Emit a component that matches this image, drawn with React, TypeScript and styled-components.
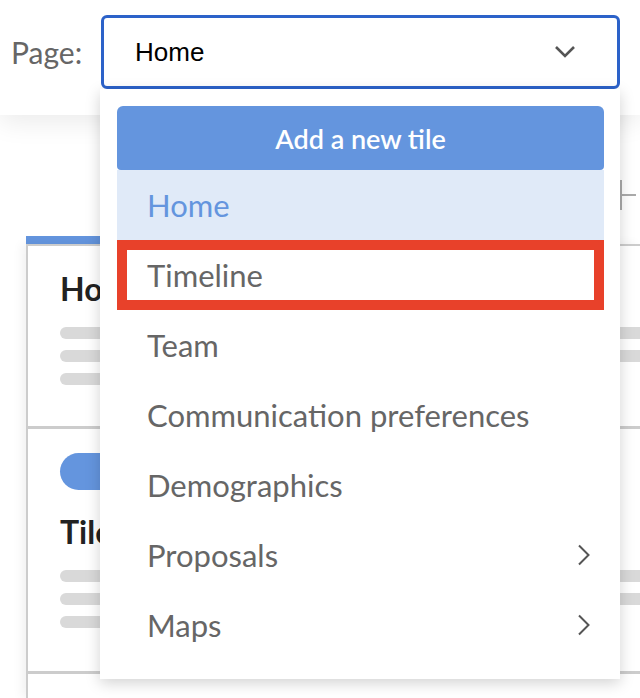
import styled, { createGlobalStyle } from 'styled-components';

const GlobalStyle = createGlobalStyle`
  html, body {
    margin: 0;
    height: 100%;
    overflow: hidden;
    background: #fff;
    font-family: Lato, "Noto Sans", sans-serif;
  }
`;

const Header = styled.header`
  position: relative;
  z-index: 2;
  height: 115px;
  box-sizing: border-box;
  padding: 15px 0 0 11px;
  display: flex;
  align-items: flex-start;
  gap: 18px;
  background: #fff;
  box-shadow: 0 8px 24px rgba(0, 0, 0, 0.08);
`;

const Label = styled.label`
  width: 72px;
  font-size: 30px;
  line-height: 74px;
  color: #666;
  white-space: nowrap;
`;

const SelectWrap = styled.div`
  position: relative;
  width: 519px;
`;

const SelectBox = styled.div`
  height: 74px;
  box-sizing: border-box;
  border: 3px solid #2c62c9;
  border-radius: 6px;
  display: flex;
  align-items: center;
  justify-content: space-between;
  padding: 0 41px 0 31px;
  font-family: "Liberation Sans", Arial, sans-serif;
  font-size: 26px;
  color: #000;
`;

const Menu = styled.div`
  position: absolute;
  top: 100%;
  left: -1px;
  width: 520px;
  box-sizing: border-box;
  padding: 17px 16px 19px 17px;
  background: #fff;
  box-shadow: 0 4px 14px rgba(0, 0, 0, 0.18);
  z-index: 3;
`;

const AddButton = styled.button`
  display: block;
  width: 100%;
  height: 64px;
  border: none;
  border-radius: 6px 6px 4px 4px;
  background: #6495de;
  color: #fff;
  font-family: Lato, sans-serif;
  font-size: 27px;
  font-weight: 600;
`;

const MenuItem = styled.div<{ $active?: boolean; $marked?: boolean }>`
  height: 70px;
  box-sizing: border-box;
  display: flex;
  align-items: center;
  justify-content: space-between;
  padding: 0 13px 0 30px;
  font-size: 31px;
  color: ${(p) => (p.$active ? '#6495de' : '#666')};
  background: ${(p) => (p.$active ? '#e0eaf8' : 'transparent')};
  box-shadow: ${(p) => (p.$marked ? 'inset 0 0 0 10px #e8412a' : 'none')};
`;

const Content = styled.main`
  padding-left: 26px;
`;

const Toolbar = styled.div`
  height: 121px;
  box-sizing: border-box;
  display: flex;
  justify-content: flex-end;
  align-items: flex-start;
  padding: 65px 4px 0 0;
`;

const Card = styled.section``;

const TabBar = styled.div`
  width: 340px;
  height: 8px;
  background: #6495de;
`;

const CardBody = styled.div`
  border-top: 2px solid #ccc;
  border-left: 2px solid #ccc;
  box-shadow: -4px 0 10px rgba(0, 0, 0, 0.06);
  background: #fff;
`;

const Tile = styled.div<{ $height: number; $last?: boolean }>`
  height: ${(p) => p.$height}px;
  box-sizing: border-box;
  padding: 24px 0 0 32px;
  border-bottom: ${(p) => (p.$last ? 'none' : '3px solid #ccc')};
`;

const Pill = styled.div`
  width: 120px;
  height: 37px;
  border-radius: 19px;
  background: #6495de;
  margin-bottom: 23px;
`;

const TileTitle = styled.h2`
  margin: 0;
  font-size: 32px;
  line-height: 38px;
  font-weight: 700;
  color: #222;
`;

const Lines = styled.div`
  margin-top: 19px;
  display: flex;
  flex-direction: column;
  gap: 11px;
`;

const Line = styled.div<{ $short?: boolean }>`
  width: ${(p) => (p.$short ? '420px' : '100%')};
  height: 12px;
  border-radius: 6px 0 0 6px;
  background: #d9d9d9;
`;

const ChevronDown = () => (
  <svg width="22" height="14" viewBox="0 0 22 14" fill="none">
    <polyline points="2,2 11,11 20,2" stroke="#555" strokeWidth="2.6" />
  </svg>
);

const ChevronRight = () => (
  <svg width="14" height="22" viewBox="0 0 14 22" fill="none">
    <polyline points="2,1.5 11.5,11 2,20.5" stroke="#555" strokeWidth="2" />
  </svg>
);

const PlusIcon = () => (
  <svg width="30" height="30" viewBox="0 0 30 30" fill="none">
    <path d="M15 0v30M0 15h30" stroke="#aaa" strokeWidth="2" />
  </svg>
);

const pages = [
  { name: 'Home', active: true },
  { name: 'Timeline', marked: true },
  { name: 'Team' },
  { name: 'Communication preferences' },
  { name: 'Demographics' },
  { name: 'Proposals', sub: true },
  { name: 'Maps', sub: true },
];

export default function App() {
  return (
    <>
      <GlobalStyle />
      <Header>
        <Label>Page:</Label>
        <SelectWrap>
          <SelectBox>
            <span>Home</span>
            <ChevronDown />
          </SelectBox>
          <Menu>
            <AddButton>Add a new tile</AddButton>
            {pages.map((p) => (
              <MenuItem key={p.name} $active={p.active} $marked={p.marked}>
                <span>{p.name}</span>
                {p.sub && <ChevronRight />}
              </MenuItem>
            ))}
          </Menu>
        </SelectWrap>
      </Header>
      <Content>
        <Toolbar>
          <PlusIcon />
        </Toolbar>
        <Card>
          <TabBar />
          <CardBody>
            <Tile $height={183}>
              <TileTitle>Home</TileTitle>
              <Lines>
                <Line />
                <Line />
                <Line $short />
              </Lines>
            </Tile>
            <Tile $height={245}>
              <Pill />
              <TileTitle>Tile</TileTitle>
              <Lines>
                <Line />
                <Line />
                <Line $short />
              </Lines>
            </Tile>
            <Tile $height={23} $last />
          </CardBody>
        </Card>
      </Content>
    </>
  );
}
